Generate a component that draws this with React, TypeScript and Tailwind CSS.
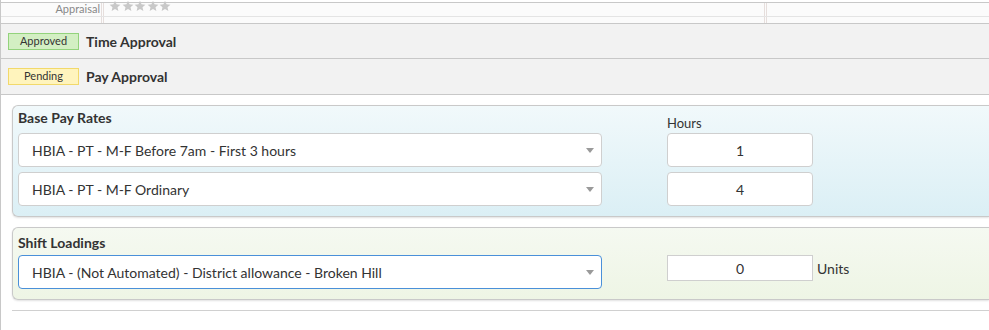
import { ReactNode } from "react";

const Star = () => (
  <svg width="12" height="12" viewBox="0 0 24 24" className="fill-[#c8c8c8]">
    <path d="M12 1.5l3.1 7.1 7.7.7-5.8 5.1 1.7 7.6L12 18l-6.7 4 1.7-7.6L1.2 9.3l7.7-.7z" />
  </svg>
);

const Caret = () => (
  <svg width="8" height="5" viewBox="0 0 8 5" className="fill-[#9a9a9a]">
    <path d="M0 0h8L4 5z" />
  </svg>
);

const Select = ({ label, focused }: { label: string; focused?: boolean }) => (
  <div
    className={`flex h-[34px] w-[584px] items-center justify-between rounded-[4px] border bg-white pl-[13px] pr-[7px] text-[14px] text-[#333] ${
      focused ? "border-[#4a90d9]" : "border-[#cfcfcf]"
    }`}
  >
    <span>{label}</span>
    <Caret />
  </div>
);

const Panel = ({ className, children }: { className: string; children: ReactNode }) => (
  <div
    className={`rounded-tl-[6px] rounded-bl-[6px] border border-r-0 border-[#c9c9c9] shadow-[0_1px_2px_rgba(0,0,0,0.12)] ${className}`}
  >
    {children}
  </div>
);

const Badge = ({ text, tone }: { text: string; tone: "green" | "yellow" }) => (
  <span
    className={`flex h-[17px] w-[71px] items-center justify-center border text-[11px] text-[#333] ${
      tone === "green" ? "border-[#93d37c] bg-[#d3efc3]" : "border-[#f2d96b] bg-[#fff4bd]"
    }`}
  >
    {text}
  </span>
);

export default function App() {
  return (
    <div className="h-[330px] w-[989px] overflow-hidden border-l border-[#c8c8c8] bg-white font-['Lato','Open_Sans',sans-serif] text-[#333]">
      {/* appraisal table */}
      <div className="mt-[2px] border-y border-[#c8c8c8] bg-[#fbfbfb]">
        <div className="flex h-[14px] border-b border-[#e4e4e4]">
          <div className="flex w-[100px] items-start justify-end pr-[1px] text-[11px] leading-[12px] text-[#888]">
            Appraisal
          </div>
          <div className="w-[3px] border-x border-[#e6dedc]" />
          <div className="-mt-[3px] flex w-[660px] gap-[0.5px] pl-[5px]">
            <Star />
            <Star />
            <Star />
            <Star />
            <Star />
          </div>
          <div className="w-[3px] border-x border-[#e6dedc]" />
        </div>
        <div className="flex h-[6px]">
          <div className="w-[100px]" />
          <div className="w-[3px] border-x border-[#e6dedc]" />
          <div className="w-[660px]" />
          <div className="w-[3px] border-x border-[#e6dedc]" />
        </div>
      </div>

      {/* approvals */}
      <div className="flex h-[35px] items-center gap-[7px] border-b border-[#c8c8c8] bg-[#f2f2f2] pl-[7px]">
        <Badge text="Approved" tone="green" />
        <span className="text-[14px] font-bold text-[#333]">Time Approval</span>
      </div>
      <div className="flex h-[36px] items-center gap-[7px] border-b border-[#c8c8c8] bg-[#f2f2f2] pl-[7px]">
        <Badge text="Pending" tone="yellow" />
        <span className="text-[14px] font-bold text-[#333]">Pay Approval</span>
      </div>

      {/* pay rates */}
      <div className="flex flex-col gap-[10px] pl-[11px] pt-[10px]">
        <Panel className="bg-gradient-to-b from-[#f1f9fb] to-[#dbeff5] px-[5px] pb-[10px]">
          <div className="flex h-[27px]">
            <div className="w-[584px] pt-[3px] text-[14px] font-bold leading-[18px]">Base Pay Rates</div>
            <div className="ml-[65px] self-end pb-[1px] text-[13px] leading-[18px]">Hours</div>
          </div>
          <div className="flex flex-col gap-[5px]">
            <div className="flex items-center gap-[65px]">
              <Select label="HBIA - PT - M-F Before 7am - First 3 hours" />
              <div className="flex h-[34px] w-[146px] items-center justify-center rounded-[4px] border border-[#cfcfcf] bg-white text-[14px]">
                1
              </div>
            </div>
            <div className="flex items-center gap-[65px]">
              <Select label="HBIA - PT - M-F Ordinary" />
              <div className="flex h-[34px] w-[146px] items-center justify-center rounded-[4px] border border-[#cfcfcf] bg-white text-[14px]">
                4
              </div>
            </div>
          </div>
        </Panel>

        <Panel className="bg-gradient-to-b from-[#f5f9f1] to-[#eef5e5] px-[5px] pb-[10px]">
          <div className="flex h-[27px] items-center pt-[1px] text-[14px] font-bold">Shift Loadings</div>
          <div className="flex items-center gap-[65px]">
            <Select label="HBIA - (Not Automated) - District allowance - Broken Hill" focused />
            <div className="flex items-center gap-[4px] self-start">
              <div className="flex h-[26px] w-[146px] items-center justify-center border border-[#cfcfcf] bg-white text-[14px]">
                0
              </div>
              <span className="text-[14px]">Units</span>
            </div>
          </div>
        </Panel>

        <div className="border-t border-[#d0d0d0]" />
      </div>
    </div>
  );
}
